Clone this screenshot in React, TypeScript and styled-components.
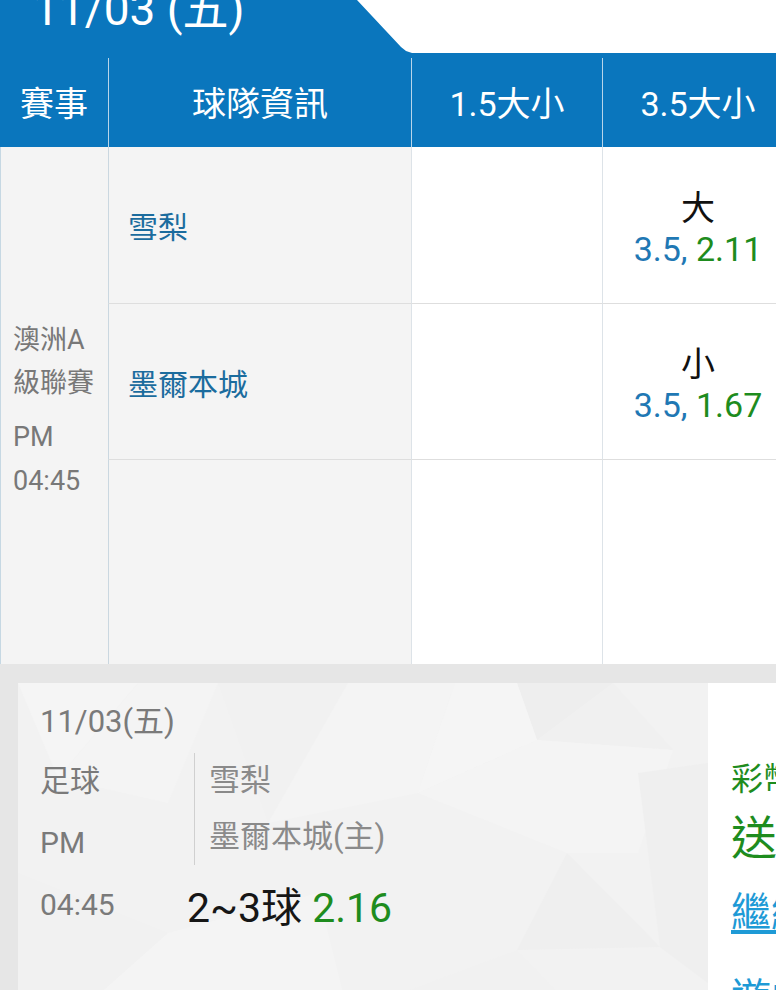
import { ReactElement } from "react";
import styled, { createGlobalStyle } from 'styled-components';

const BLUE = '#0a76bd';
const GREEN = '#1e8c1e';

const GlobalStyle = createGlobalStyle`
    html, body {
        margin: 0;
        padding: 0;
        overflow: hidden;
        background: #fff;
    }
    body {
        font-family: Roboto, "Noto Sans CJK TC", sans-serif;
    }
`;

const Page = styled.div`
    width: 793px;
`;

const DateTab = styled.div`
    width: 412px;
    height: 53px;
    background: ${BLUE};
    clip-path: polygon(0 0, 357px 0, 401px 47px, 406px 51px, 412px 53px, 0 53px);
    color: #fff;
    font-size: 46px;
    line-height: 46px;
    padding-left: 33px;
    box-sizing: border-box;
    overflow: hidden;
`;

const DateText = styled.div`
    margin-top: -14px;
    white-space: nowrap;
`;

const COLUMNS = '108px 303px 191px 191px';

const HeaderRow = styled.div`
    display: grid;
    grid-template-columns: ${COLUMNS};
    height: 94px;
    padding-top: 5px;
    box-sizing: border-box;
    background: ${BLUE};
`;

const HeaderCell = styled.div<{ $first?: boolean }>`
    display: flex;
    align-items: center;
    justify-content: center;
    border-left: ${p => p.$first ? 'none' : '1px solid #b8d5ea'};
    color: #fff;
    font-size: 34px;
    padding-bottom: 2px;
`;

const Body = styled.div`
    display: grid;
    grid-template-columns: ${COLUMNS};
    grid-template-rows: 157px 156px 204px;
`;

const LeagueCell = styled.div`
    grid-row: 1 / 4;
    background: #f4f4f4;
    border-left: 1px solid #c6d8e3;
    display: flex;
    flex-direction: column;
    justify-content: center;
    padding: 10px 8px 0 12px;
    color: #787878;
    font-size: 27px;
`;

const LeagueName = styled.div`
    line-height: 43px;
`;

const LeagueTime = styled.div`
    line-height: 44px;
    margin-top: 10px;
`;

const Cell = styled.div<{ $shade?: boolean; $last?: boolean }>`
    background: ${p => p.$shade ? '#f4f4f4' : '#fff'};
    border-left: 1px solid ${p => p.$shade ? '#cad7e0' : '#dde3e8'};
    border-bottom: ${p => p.$last ? 'none' : '1px solid #dedede'};
    display: flex;
    flex-direction: column;
    justify-content: center;
`;

const TeamName = styled.div`
    padding-left: 19px;
    color: #1b6c9e;
    font-size: 30px;
`;

const OddsBox = styled.div`
    text-align: center;
    font-size: 34px;
    line-height: 41px;
    padding-top: 7px;
`;

const OddsSide = styled.div`
    color: #111;
`;

const Line = styled.span`
    color: #1f78b4;
`;

const Price = styled.span`
    color: ${GREEN};
`;

const Promo = styled.section`
    display: flex;
    height: 330px;
    padding: 19px 0 0 18px;
    background: #e6e6e6;
`;

const Card = styled.div`
    position: relative;
    width: 690px;
    flex-shrink: 0;
    background: #f2f2f2;
    overflow: hidden;
    color: #7a7a7a;
    font-size: 30px;
`;

const CardPattern = styled.svg`
    position: absolute;
    inset: 0;
    z-index: 0;
`;

const CardContent = styled.div`
    position: relative;
    z-index: 1;
    padding: 19px 0 0 22px;
`;

const CardDate = styled.div`
    font-size: 31px;
    line-height: 40px;
`;

const InfoRow = styled.div`
    display: flex;
    margin-top: 8px;
`;

const SportCol = styled.div`
    width: 154px;
    line-height: 62px;
`;

const TeamsCol = styled.div`
    align-self: flex-start;
    margin-top: 3px;
    border-left: 1px solid #d0d0d0;
    padding-left: 14px;
    line-height: 56px;
    color: #8a8a8a;
    font-size: 31px;
`;

const BetRow = styled.div`
    display: flex;
    align-items: center;
    height: 60px;
`;

const BetTime = styled.div`
    width: 147px;
`;

const BetPick = styled.div`
    color: #161616;
    font-size: 41px;
    white-space: nowrap;
`;

const SidePanel = styled.div`
    flex: 1;
    background: #fff;
    padding: 74px 0 0 23px;
    white-space: nowrap;
`;

const PanelTitle = styled.div`
    color: ${GREEN};
    font-size: 32px;
    line-height: 44px;
`;

const PanelGift = styled.div`
    color: ${GREEN};
    font-size: 46px;
    line-height: 60px;
    margin-top: 7px;
`;

const PanelLink = styled.a`
    display: block;
    color: #1e9ad6;
    font-size: 40px;
    line-height: 60px;
    margin-top: 15px;
    text-decoration: underline;
    text-underline-offset: 4px;
`;

const PanelNext = styled.div`
    color: #1e9ad6;
    font-size: 40px;
    line-height: 60px;
    margin-top: 26px;
`;

type Team = { name: string; side: string; line: string; price: string };

const TEAMS: Team[] = [
    { name: '雪梨', side: '大', line: '3.5,', price: '2.11' },
    { name: '墨爾本城', side: '小', line: '3.5,', price: '1.67' },
];

function Pattern(): ReactElement {
    return (
        <CardPattern width="690" height="330" viewBox="0 0 690 330">
            <polygon points="0,0 120,0 40,95" fill="#f5f5f5" />
            <polygon points="40,95 120,0 200,0 150,120" fill="#f4f4f4" />
            <polygon points="200,0 330,0 250,140" fill="#f1f1f1" />
            <polygon points="330,0 437,0 400,110 250,140" fill="#f4f4f4" />
            <polygon points="499,0 595,0 519,57" fill="#eeeeee" />
            <polygon points="519,57 595,0 655,67" fill="#f0f0f0" />
            <polygon points="437,0 499,0 519,57 400,110" fill="#f5f5f5" />
            <polygon points="400,110 519,57 655,67 620,170 549,170" fill="#f4f4f4" />
            <polygon points="549,170 642,264 499,267" fill="#efefef" />
            <polygon points="620,90 690,80 690,300 642,264" fill="#efefef" />
            <polygon points="0,190 150,250 60,330 0,330" fill="#f1f1f1" />
            <polygon points="150,250 300,210 330,330 60,330" fill="#f4f4f4" />
            <polygon points="330,330 499,267 560,330" fill="#f1f1f1" />
        </CardPattern>
    );
}

export default function App(): ReactElement {
    return (
        <Page>
            <GlobalStyle />
            <DateTab>
                <DateText>11/03 (五)</DateText>
            </DateTab>

            <HeaderRow>
                <HeaderCell $first>賽事</HeaderCell>
                <HeaderCell>球隊資訊</HeaderCell>
                <HeaderCell>1.5大小</HeaderCell>
                <HeaderCell>3.5大小</HeaderCell>
            </HeaderRow>

            <Body>
                <LeagueCell>
                    <LeagueName>澳洲A級聯賽</LeagueName>
                    <LeagueTime>PM<br />04:45</LeagueTime>
                </LeagueCell>
                {TEAMS.map(team => (
                    <>
                        <Cell $shade key={team.name + '-n'}>
                            <TeamName>{team.name}</TeamName>
                        </Cell>
                        <Cell key={team.name + '-a'} />
                        <Cell key={team.name + '-b'}>
                            <OddsBox>
                                <OddsSide>{team.side}</OddsSide>
                                <div><Line>{team.line}</Line> <Price>{team.price}</Price></div>
                            </OddsBox>
                        </Cell>
                    </>
                ))}
                <Cell $shade $last />
                <Cell $last />
                <Cell $last />
            </Body>

            <Promo>
                <Card>
                    <Pattern />
                    <CardContent>
                        <CardDate>11/03(五)</CardDate>
                        <InfoRow>
                            <SportCol>足球<br />PM</SportCol>
                            <TeamsCol>雪梨<br />墨爾本城(主)</TeamsCol>
                        </InfoRow>
                        <BetRow>
                            <BetTime>04:45</BetTime>
                            <BetPick>2~3球 <Price>2.16</Price></BetPick>
                        </BetRow>
                    </CardContent>
                </Card>
                <SidePanel>
                    <PanelTitle>彩幣加碼</PanelTitle>
                    <PanelGift>送</PanelGift>
                    <PanelLink href="#">繼續投注</PanelLink>
                    <PanelNext>遊戲說明</PanelNext>
                </SidePanel>
            </Promo>
        </Page>
    );
}
